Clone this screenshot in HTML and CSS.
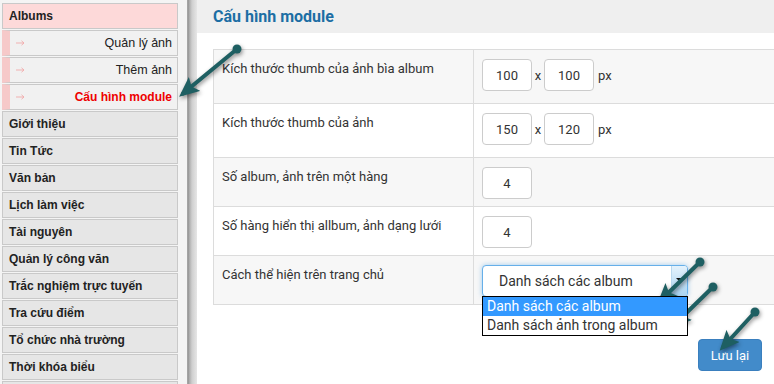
FILE: index.html
```html
<!DOCTYPE html>
<html lang="vi">
<head>
<meta charset="utf-8">
<title>Cấu hình module</title>
<link rel="stylesheet" href="styles.css">
</head>
<body>
<div class="page">
  <aside class="sidebar">
    <div class="nav-head">Albums</div>
    <div class="nav-sub"><svg class="sub-arrow" width="9" height="6" viewBox="0 0 9 6"><path d="M0,3 H8 M5.5,0.8 L8,3 L5.5,5.2"/></svg><span class="sub-label">Quản lý ảnh</span></div>
    <div class="nav-sub"><svg class="sub-arrow" width="9" height="6" viewBox="0 0 9 6"><path d="M0,3 H8 M5.5,0.8 L8,3 L5.5,5.2"/></svg><span class="sub-label">Thêm ảnh</span></div>
    <div class="nav-sub active"><svg class="sub-arrow" width="9" height="6" viewBox="0 0 9 6"><path d="M0,3 H8 M5.5,0.8 L8,3 L5.5,5.2"/></svg><span class="sub-label">Cấu hình module</span></div>
    <div class="nav-item">Giới thiệu</div>
    <div class="nav-item">Tin Tức</div>
    <div class="nav-item">Văn bản</div>
    <div class="nav-item">Lịch làm việc</div>
    <div class="nav-item">Tài nguyên</div>
    <div class="nav-item">Quản lý công văn</div>
    <div class="nav-item">Trắc nghiệm trực tuyến</div>
    <div class="nav-item">Tra cứu điểm</div>
    <div class="nav-item">Tổ chức nhà trường</div>
    <div class="nav-item">Thời khóa biểu</div>
    <div class="nav-item"></div>
  </aside>
  <div class="divider"></div>
  <main class="main">
    <div class="main-header"><h1 class="title">Cấu hình module</h1></div>
    <div class="main-body">
      <table class="config">
        <tr class="row odd tall">
          <td class="label">Kích thước thumb của ảnh bìa album</td>
          <td class="value"><span class="inp">100</span><span class="times">x</span><span class="inp">100</span><span class="unit">px</span></td>
        </tr>
        <tr class="row tall">
          <td class="label">Kích thước thumb của ảnh</td>
          <td class="value"><span class="inp">150</span><span class="times">x</span><span class="inp">120</span><span class="unit">px</span></td>
        </tr>
        <tr class="row odd">
          <td class="label">Số album, ảnh trên một hàng</td>
          <td class="value"><span class="inp">4</span></td>
        </tr>
        <tr class="row">
          <td class="label">Số hàng hiển thị allbum, ảnh dạng lưới</td>
          <td class="value"><span class="inp">4</span></td>
        </tr>
        <tr class="row odd">
          <td class="label">Cách thể hiện trên trang chủ</td>
          <td class="value">
            <div class="select-wrap">
              <div class="select"><span class="select-text">Danh sách các album</span><span class="select-btn"><span class="caret"></span></span></div>
              <div class="dropdown">
                <div class="opt selected">Danh sách các album</div>
                <div class="opt">Danh sách ảnh trong album</div>
              </div>
            </div>
          </td>
        </tr>
      </table>
      <div class="actions"><button class="btn">Lưu lại</button></div>
    </div>
  </main>
  <svg class="arrows" width="774" height="384" viewBox="0 0 774 384">
    <defs>
      <marker id="ah" markerUnits="userSpaceOnUse" markerWidth="20" markerHeight="18" viewBox="0 0 20 18" refX="15" refY="9" orient="auto">
        <path d="M0,0 L20,9 L0,18 L4,9 z" fill="#1e5f62"/>
      </marker>
    </defs>
    <g class="arrow-g">
      <line x1="237" y1="49" x2="183" y2="93.5" marker-end="url(#ah)"/>
      <circle cx="237" cy="49" r="4.5"/>
      <line x1="700" y1="262" x2="661" y2="300" marker-end="url(#ah)"/>
      <circle cx="700" cy="262" r="4.5"/>
      <line x1="713" y1="287" x2="675" y2="324" marker-end="url(#ah)"/>
      <circle cx="713" cy="287" r="4.5"/>
      <line x1="755" y1="312" x2="723" y2="347" marker-end="url(#ah)"/>
      <circle cx="755" cy="312" r="4.5"/>
    </g>
  </svg>
</div>
</body>
</html>
```
FILE: styles.css
```css
* { box-sizing: border-box; }
html, body { margin: 0; padding: 0; }
body { width: 774px; height: 384px; overflow: hidden; background: #fff; font-family: Roboto, "Liberation Sans", Arial, sans-serif; color: #333; }
.page { position: relative; display: flex; width: 774px; height: 384px; overflow: hidden; }

.sidebar { width: 187px; flex: none; background: #f4f4f4; padding: 3px 9px 0 2px; font-family: "Liberation Sans", Arial, sans-serif; font-size: 12px; }
.nav-head, .nav-sub, .nav-item { height: 26px; margin-bottom: 1px; border: 1px solid #c9c9c9; display: flex; align-items: center; }
.nav-head { background: #fdd9d9; font-weight: bold; color: #222; padding-left: 6px; }
.nav-sub { background: #f1f1f1; border-left: 8px solid #f6c9c9; padding: 0 5px 0 6px; font-size: 12.5px; color: #222; }
.nav-sub .sub-arrow { fill: none; stroke: #f2aaaa; stroke-width: 0.9; }
.nav-sub .sub-label { margin-left: auto; }
.nav-sub.active .sub-label { color: #e00; font-weight: bold; font-size: 12px; }
.nav-item { background: #e6e6e6; font-weight: bold; color: #222; padding-left: 6px; }

.divider { width: 10px; flex: none; background: linear-gradient(to right, #b9b9b9 0, #8f8f8f 1px, #a8a8a8 2px, #cfcfcf 5px, #e6e6e6 10px); }

.main { flex: 1; min-width: 0; overflow: hidden; }
.main-header { height: 33px; background: #efefef; padding-left: 16px; display: flex; align-items: center; }
.title { margin: 0; font-size: 16px; font-weight: bold; color: #1c6ea4; }
.main-body { padding: 16px 0 0 16px; }

.config { border-collapse: collapse; width: 620px; border: 1px solid #dcdcdc; font-size: 13px; }
.config td { border: 1px solid #dcdcdc; vertical-align: top; }
.row { height: 49px; }
.row.tall { height: 54px; }
.row.odd { background: #f7f7f7; }
.label { width: 260px; padding: 10px 8px 0 8px; line-height: 18px; color: #333; }
.value { padding: 9px 8px 0 8px; }
.inp { display: inline-flex; align-items: center; justify-content: center; width: 50px; height: 32px; border: 1px solid #cccccc; border-radius: 4px; background: #fff; color: #333; font-size: 13px; vertical-align: middle; }
.times { display: inline-block; width: 12px; text-align: center; vertical-align: middle; color: #333; }
.unit { display: inline-block; margin-left: 4px; vertical-align: middle; color: #333; }

.select-wrap { position: relative; width: 206px; }
.select { height: 32px; border: 1px solid #66afe9; border-radius: 4px; box-shadow: 0 0 5px rgba(102, 175, 233, 0.6); background: #fff; display: flex; align-items: center; overflow: hidden; }
.select-text { flex: 1; padding-left: 16px; font-size: 14px; color: #333; }
.select-btn { width: 16px; align-self: stretch; background: linear-gradient(to bottom, #e4f2fc, #a9d4f2); border-left: 1px solid #b9d8ee; display: flex; justify-content: center; padding-top: 12px; }
.caret { width: 0; height: 0; border-left: 4px solid transparent; border-right: 4px solid transparent; border-top: 4px solid #111; }
.dropdown { position: absolute; left: 0; top: 31px; width: 206px; background: #fff; border: 1px solid #000; font-size: 14px; z-index: 2; }
.opt { height: 19px; line-height: 19px; padding-left: 4px; color: #333; }
.opt.selected { background: #3399ff; color: #fff; }

.actions { width: 549px; display: flex; justify-content: flex-end; padding-top: 34px; }
.btn { width: 64px; height: 32px; border: 1px solid #3a7fbe; border-radius: 4px; background: #428bca; color: #fff; font-family: Roboto, "Liberation Sans", Arial, sans-serif; font-size: 13px; padding: 0; }

.arrows { position: absolute; left: 0; top: 0; pointer-events: none; filter: drop-shadow(1px 2px 2px rgba(0, 0, 0, 0.45)); }
.arrow-g line { stroke: #1e5f62; stroke-width: 4; stroke-linecap: round; }
.arrow-g circle { fill: #1e5f62; }
```
